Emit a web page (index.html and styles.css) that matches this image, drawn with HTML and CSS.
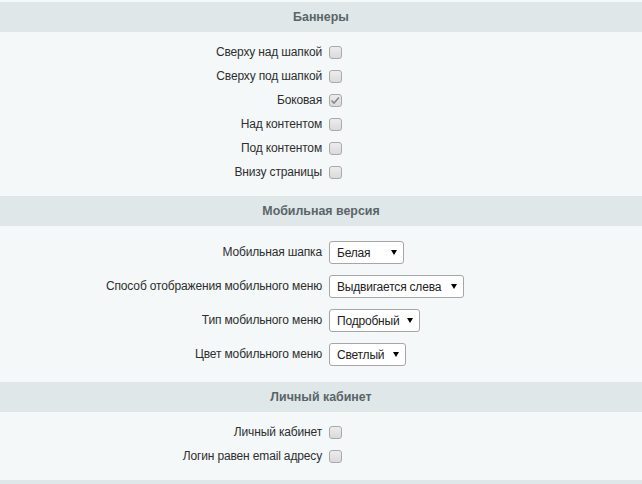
FILE: index.html
```html
<!DOCTYPE html>
<html lang="ru">
<head>
<meta charset="utf-8">
<title>Настройки</title>
<link rel="stylesheet" href="styles.css">
</head>
<body>
<div class="settings">
  <section class="group">
    <h2 class="group-title">Баннеры</h2>
    <div class="group-body">
      <label class="row row-check"><span class="label">Сверху над шапкой</span><input type="checkbox" class="check"></label>
      <label class="row row-check"><span class="label">Сверху под шапкой</span><input type="checkbox" class="check"></label>
      <label class="row row-check"><span class="label">Боковая</span><input type="checkbox" class="check" checked></label>
      <label class="row row-check"><span class="label">Над контентом</span><input type="checkbox" class="check"></label>
      <label class="row row-check"><span class="label">Под контентом</span><input type="checkbox" class="check"></label>
      <label class="row row-check"><span class="label">Внизу страницы</span><input type="checkbox" class="check"></label>
    </div>
  </section>

  <section class="group">
    <h2 class="group-title">Мобильная версия</h2>
    <div class="group-body group-body-selects">
      <label class="row row-select"><span class="label">Мобильная шапка</span><select class="select select-header"><option>Белая</option></select></label>
      <label class="row row-select"><span class="label">Способ отображения мобильного меню</span><select class="select select-menu-mode"><option>Выдвигается слева</option></select></label>
      <label class="row row-select"><span class="label">Тип мобильного меню</span><select class="select select-menu-type"><option>Подробный</option></select></label>
      <label class="row row-select"><span class="label">Цвет мобильного меню</span><select class="select select-menu-color"><option>Светлый</option></select></label>
    </div>
  </section>

  <section class="group">
    <h2 class="group-title">Личный кабинет</h2>
    <div class="group-body">
      <label class="row row-check"><span class="label">Личный кабинет</span><input type="checkbox" class="check"></label>
      <label class="row row-check"><span class="label">Логин равен email адресу</span><input type="checkbox" class="check"></label>
    </div>
  </section>

  <div class="group-title group-title-next"></div>
</div>
</body>
</html>
```
FILE: styles.css
```css
html, body {
  margin: 0;
  padding: 0;
  background: #f4f8f9;
}

body {
  font-family: Arial, "Liberation Sans", sans-serif;
  font-size: 12px;
  color: #2e2e2e;
  height: 484px;
  overflow: hidden;
}

.settings {
  padding-top: 2px;
}

.group-title {
  margin: 0;
  height: 30px;
  line-height: 30px;
  background: #e0e7e9;
  color: #5a6568;
  font-size: 12.4px;
  font-weight: bold;
  text-align: center;
}

.group-title-next {
  height: 5px;
}

.group-body {
  padding: 8px 0 12px;
}

.group-body-selects {
  padding: 9px 0 11px;
}

.row {
  display: grid;
  grid-template-columns: 322px 1fr;
  align-items: center;
  column-gap: 7px;
}

.row-check {
  height: 24px;
}

.row-select {
  height: 34px;
}

.label {
  text-align: right;
  white-space: nowrap;
  letter-spacing: -0.15px;
}

/* checkbox drawn as a rounded grey box */
.check {
  appearance: none;
  -webkit-appearance: none;
  margin: 0;
  width: 13px;
  height: 13px;
  border: 1px solid #a9a9a9;
  border-radius: 3px;
  background: linear-gradient(#ececec, #dadada);
  box-sizing: border-box;
}

.check:checked {
  background:
    url("data:image/svg+xml,%3Csvg xmlns='http://www.w3.org/2000/svg' width='13' height='13' viewBox='0 0 13 13'%3E%3Cpath d='M2.5 6.5 L5 9 L10 3.5' fill='none' stroke='%23888' stroke-width='1.6'/%3E%3C/svg%3E") center / 13px 13px no-repeat,
    linear-gradient(#ececec, #dadada);
}

/* select with a small black triangle on the right */
.select {
  appearance: none;
  -webkit-appearance: none;
  justify-self: start;
  box-sizing: border-box;
  margin: 0;
  height: 23px;
  padding: 1px 16px 0 7px;
  font-family: Arial, "Liberation Sans", sans-serif;
  font-size: 12px;
  letter-spacing: -0.2px;
  color: #222;
  border: 1px solid #a6a6a6;
  border-radius: 3px;
  background:
    url("data:image/svg+xml,%3Csvg xmlns='http://www.w3.org/2000/svg' width='6' height='5' viewBox='0 0 6 5'%3E%3Cpath d='M0 0 H6 L3 5 Z' fill='%23000'/%3E%3C/svg%3E") right 6px center / 6px 5px no-repeat,
    #ffffff;
}

.select-header { width: 75px; }
.select-menu-mode { width: 135px; }
.select-menu-type { width: 91px; }
.select-menu-color { width: 77px; }
```
